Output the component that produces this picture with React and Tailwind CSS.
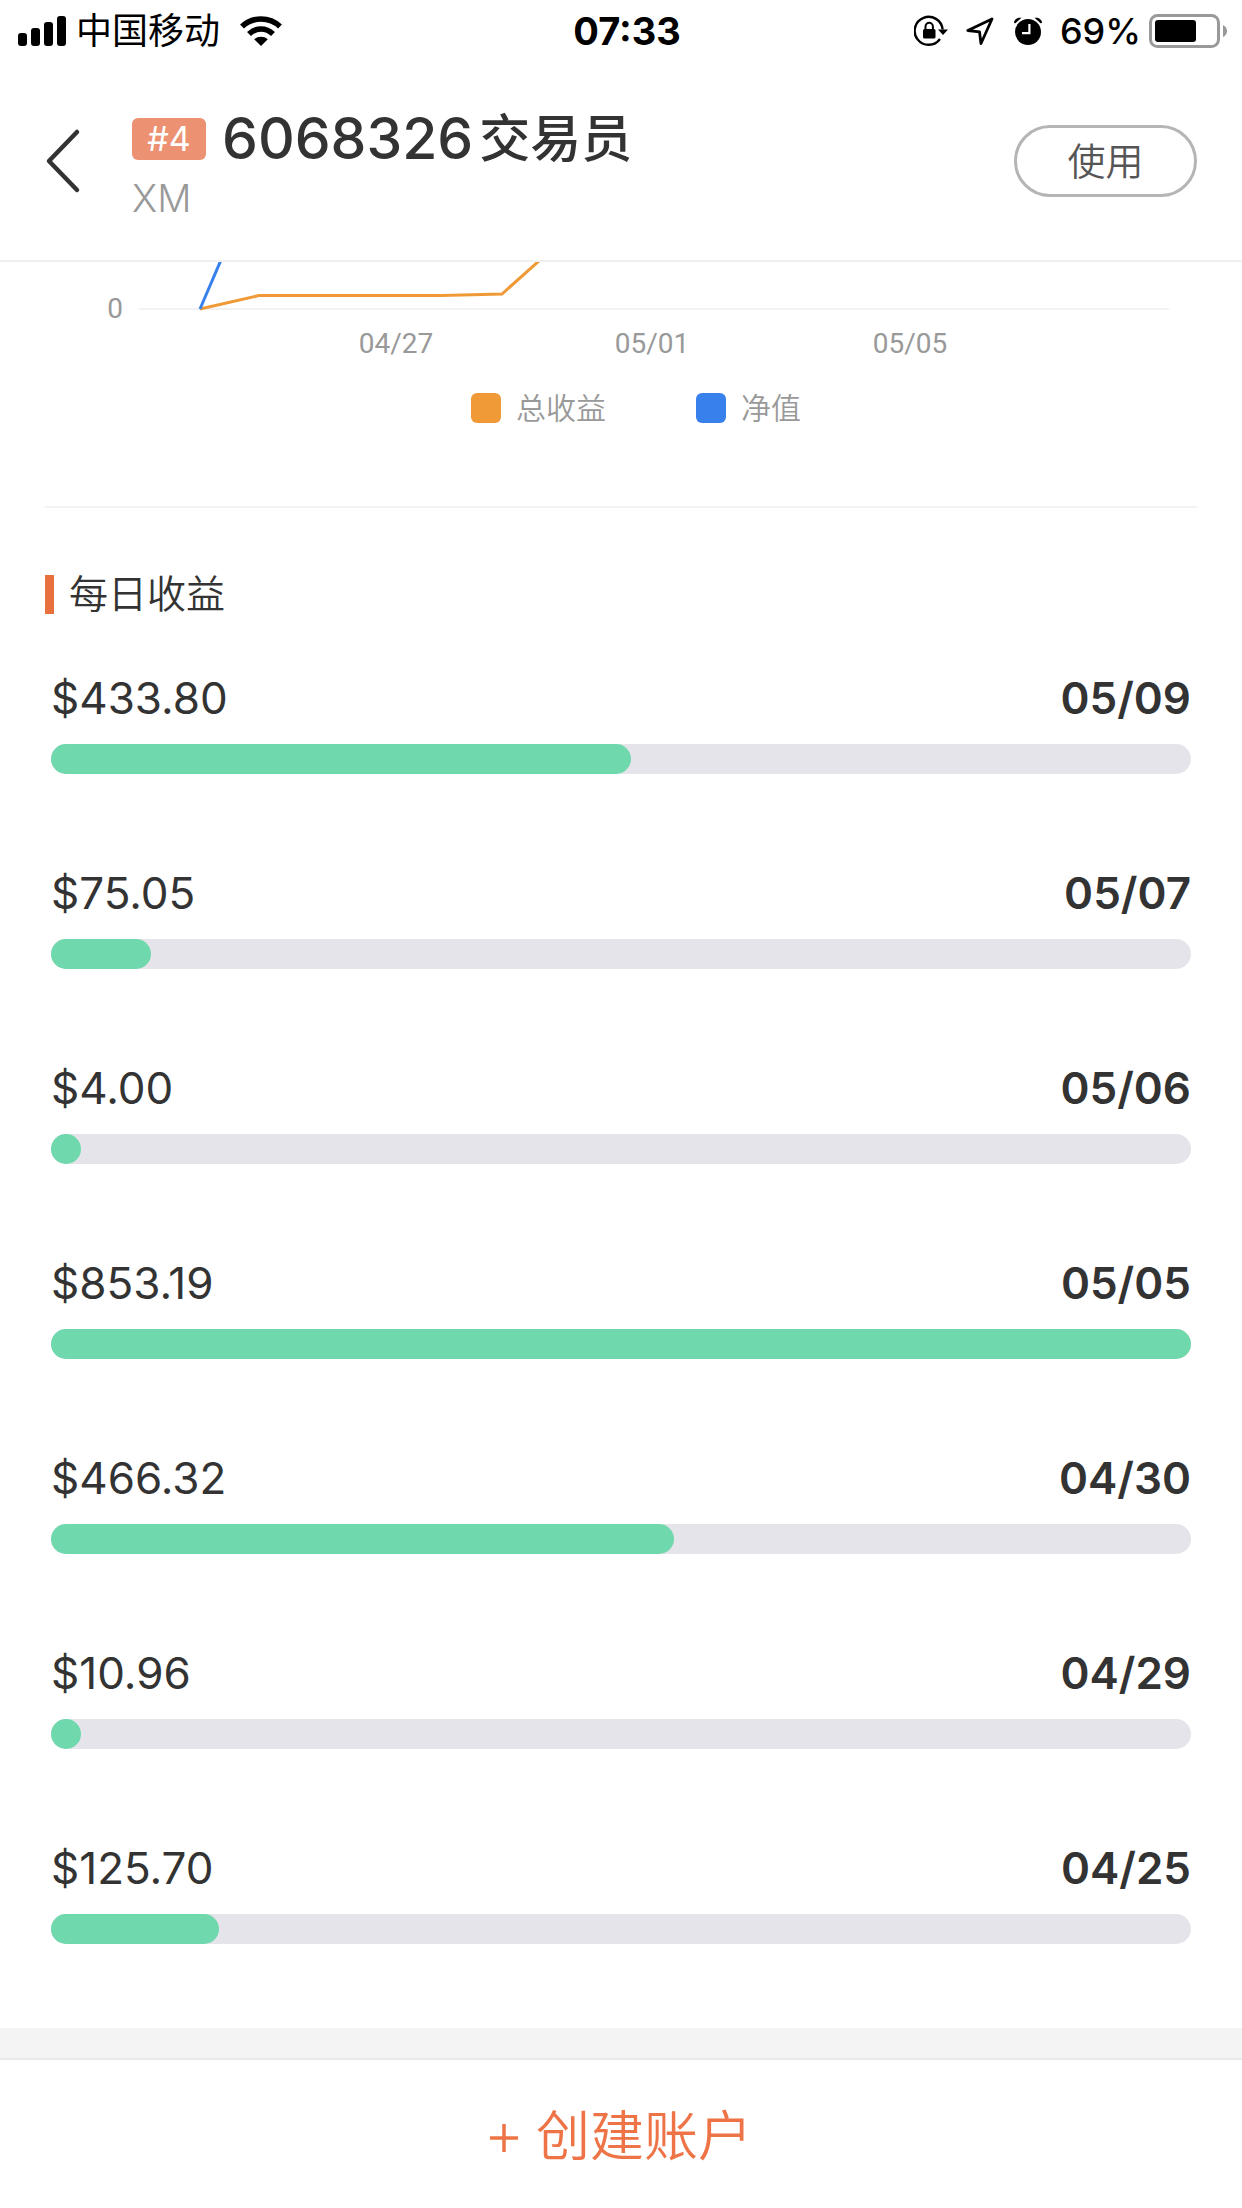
const days = [
    { date: "05/09", profit: 433.8 },
    { date: "05/07", profit: 75.05 },
    { date: "05/06", profit: 4 },
    { date: "05/05", profit: 853.19 },
    { date: "04/30", profit: 466.32 },
    { date: "04/29", profit: 10.96 },
    { date: "04/25", profit: 125.7 },
];

function StatusBar() {
    return (
        <div className="grid grid-cols-3 items-center h-[62px] pl-[18px] pr-[14px] text-black text-[36px] leading-[40px] font-medium">
            <div className="flex items-center">
                <svg viewBox="0 0 48 30" className="w-12 h-[30px]" fill="currentColor">
                    <rect x="0" y="17" width="9" height="13" rx="3" />
                    <rect x="13" y="12" width="9" height="18" rx="3" />
                    <rect x="26" y="6" width="9" height="24" rx="3" />
                    <rect x="39" y="0" width="9" height="30" rx="3" />
                </svg>
                <span className="ml-[10px] font-normal">中国移动</span>
                <svg viewBox="0 0 42 30" className="ml-[20px] w-[42px] h-[30px]" fill="none" stroke="currentColor" strokeWidth="5.6">
                    <path d="M2 10.5C12.500 .5 29.500 .5 40 10.500" />
                    <path d="M9 18C16 11.300 26 11.300 33 18" />
                    <path d="M21 30l-6.800-6.800c3.800-3.300 9.800-3.300 13.600 0z" fill="currentColor" stroke="none" />
                </svg>
            </div>
            <div className="pl-2 text-center text-[38px] font-bold">07:33</div>
            <div className="flex items-center justify-end">
                <svg viewBox="0 0 34 32" className="w-[34px] h-8" fill="none" stroke="currentColor" strokeWidth="2.4">
                    <path d="M28.600 14.500A14 14 0 1 0 26 24" />
                    <path d="M24 14.500h10l-5 5.500z" fill="currentColor" stroke="none" />
                    <rect x="9" y="14" width="12.500" height="9.500" rx="1.500" fill="currentColor" stroke="none" />
                    <path d="M11.500 15v-3.500a3.700 3.700 0 0 1 7.400 0V15" strokeWidth="2" />
                </svg>
                <svg viewBox="0 0 28 28" className="ml-[18px] w-7 h-7" fill="none" stroke="currentColor" strokeWidth="2.800" strokeLinejoin="round">
                    <path d="M26 2L1.800 13.500l11.700 1.300 1.500 11.700z" />
                </svg>
                <svg viewBox="0 0 28 28" className="ml-5 w-7 h-7" fill="currentColor">
                    <circle cx="14" cy="15" r="13" />
                    <path d="M0 6C0 2 4 0 7.500 .8L1.500 6.200zM28 6C28 2 24 0 20.500 .8l6 5.400z" />
                    <path d="M15.400 7v9.200H8" fill="none" stroke="#fff" strokeWidth="2.200" />
                </svg>
                <span className="ml-[18px]">69%</span>
                <svg viewBox="0 0 79 34" className="ml-2 w-[79px] h-[34px]">
                    <rect x="1.500" y="1.500" width="68" height="31" rx="7" fill="none" stroke="#999" strokeWidth="3" />
                    <rect x="6" y="6" width="41" height="22" rx="3" fill="#000" />
                    <path d="M74 11q4 2 4 6t-4 6z" fill="#999" />
                </svg>
            </div>
        </div>
    );
}

function Header() {
    return (
        <header className="flex items-start h-[200px] pl-[45px] pr-[45px] border-b-2 border-[#f0f0f0]">
            <button type="button" aria-label="返回" className="mt-[66px]">
                <svg viewBox="0 0 36 66" className="w-9 h-[66px]" fill="none" stroke="#333" strokeWidth="4.500" strokeLinecap="round" strokeLinejoin="round">
                    <path d="M32 4L4 33l28 29" />
                </svg>
            </button>
            <div className="ml-[51px] mt-[42px] grow">
                <h1 className="flex items-center h-[70px] text-[57px] leading-[70px] font-medium">
                    <span className="w-[74px] h-[42px] mr-4 rounded-md bg-[#ec9273] text-white text-[34px] leading-[42px] text-center font-normal">#4</span>
                    6068326
                    <span className="ml-[6px] text-[51px]">交易员</span>
                </h1>
                <p className="text-[38px] leading-[48px] font-light text-[#999]">XM</p>
            </div>
            <button type="button" className="mt-[63px] w-[183px] h-[72px] rounded-full border-3 border-[#b5b5b5] text-[38px] leading-[60px] font-[350] text-[#555]">使用</button>
        </header>
    );
}

function Chart() {
    return (
        <div className="mx-[45px] pb-[78px] border-b-2 border-[#f2f2f2] text-[#999]">
            <svg viewBox="0 0 1152 110" className="w-full" fill="none" strokeWidth="3">
                <path d="M94 47h1030" stroke="#f2f2f5" strokeWidth="2" />
                <path d="M155 47l59-13.500h183l60-1.500 38-34" stroke="#ef9a36" />
                <path d="M155 47l21-49" stroke="#3880ec" />
                <g fill="currentColor" stroke="none" textAnchor="middle" className="font-['Roboto'] text-[28px]">
                    <text x="70" y="56">0</text>
                    <text x="351" y="91">04/27</text>
                    <text x="607" y="91">05/01</text>
                    <text x="865" y="91">05/05</text>
                </g>
            </svg>
            <ul className="mt-4 flex justify-center gap-[90px] pl-[30px] text-[30px] leading-[40px] font-[350]">
                <li className="flex items-center gap-[15px]">
                    <span className="size-[30px] rounded-md bg-[#f09a37]"></span>
                    总收益
                </li>
                <li className="flex items-center gap-[15px]">
                    <span className="size-[30px] rounded-md bg-[#3880ec]"></span>
                    净值
                </li>
            </ul>
        </div>
    );
}

function DailyProfit() {
    const max = Math.max(...days.map(day => day.profit));

    return (
        <section className="pt-[62px] pb-[84px]">
            <h2 className="flex items-center gap-[15px] ml-[45px] text-[39px] leading-[48px] font-[350]">
                <span className="w-[9px] h-[39px] bg-[#e8703f]"></span>
                每日收益
            </h2>
            <ul className="mt-[52px] mx-[51px] flex flex-col gap-[91px]">
                {days.map(day => (
                    <li key={day.date}>
                        <div className="flex justify-between text-[44px] leading-[56px]">
                            <span>${day.profit.toFixed(2)}</span>
                            <span className="font-semibold">{day.date}</span>
                        </div>
                        <div className="mt-[18px] h-[30px] rounded-full bg-[#e4e4ea]">
                            <div className="h-full min-w-[30px] rounded-full bg-[#6fd8ad]" style={{ width: (day.profit / max) * 100 + "%" }}></div>
                        </div>
                    </li>
                ))}
            </ul>
        </section>
    );
}

export default function App() {
    return (
        <div className="min-h-screen bg-white text-[#333] font-['Inter','Noto_Sans_CJK_SC',sans-serif]">
            <StatusBar />
            <Header />
            <main>
                <Chart />
                <DailyProfit />
            </main>
            <footer className="border-t-[30px] border-[#f4f4f4]">
                <button type="button" className="flex items-center justify-center gap-[18px] w-full h-[150px] pt-1 border-t-2 border-[#e9e9e9] text-[54px] font-[350] text-[#ee7447]">
                    <svg viewBox="0 0 28 28" className="mt-1 size-7" stroke="currentColor" strokeWidth="3.500">
                        <path d="M14 0v28M0 14h28" />
                    </svg>
                    创建账户
                </button>
            </footer>
        </div>
    );
}
